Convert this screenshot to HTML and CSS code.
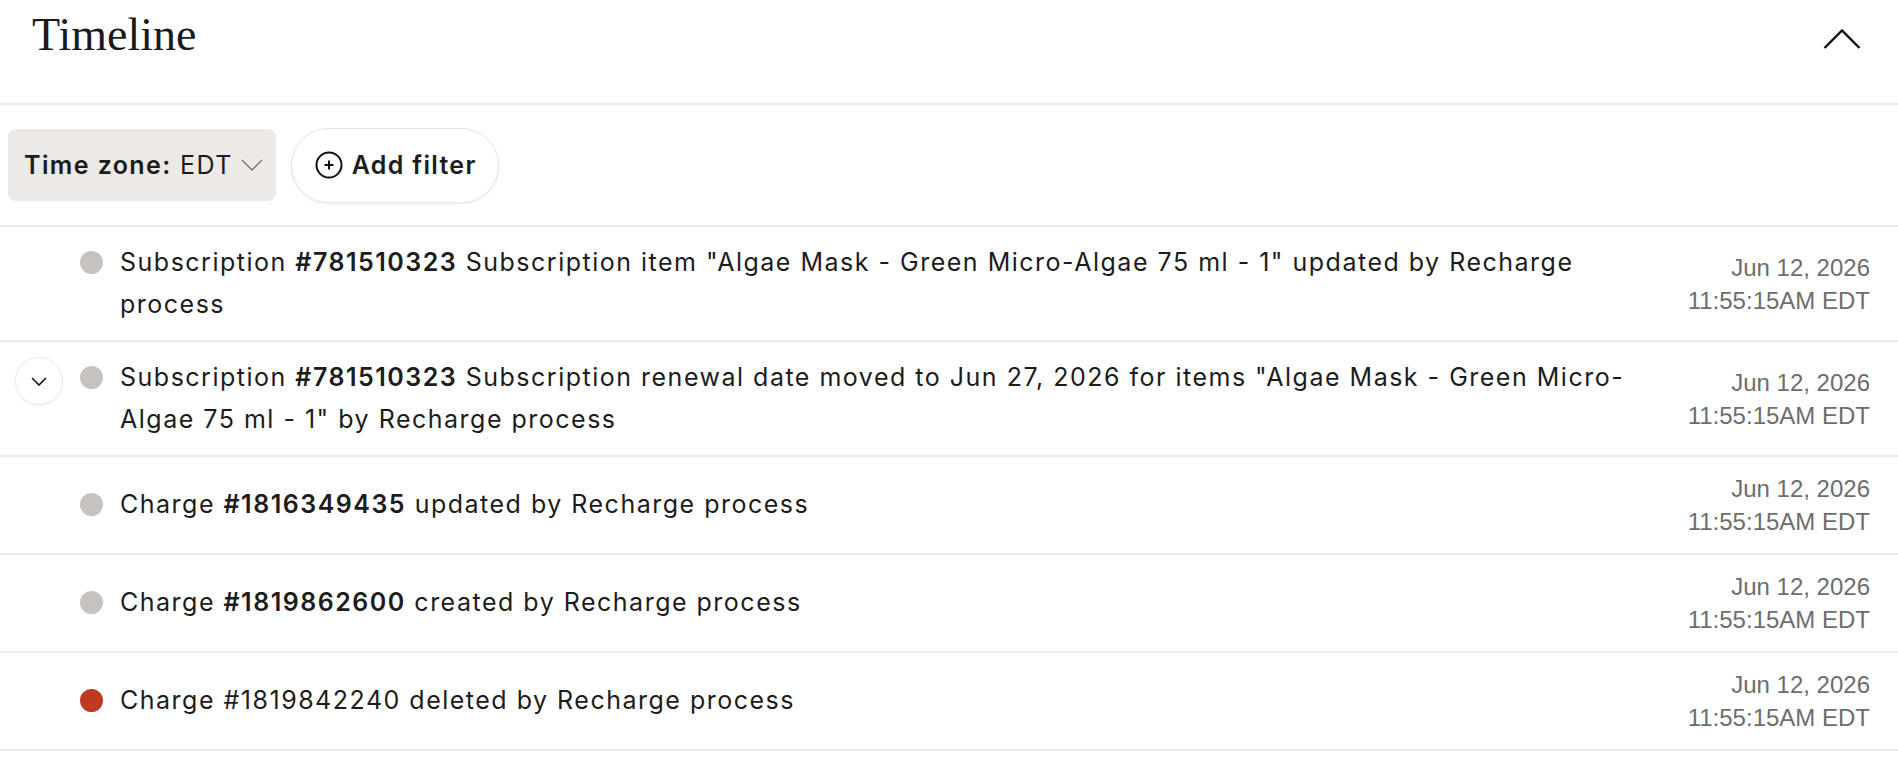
FILE: index.html
```html
<!DOCTYPE html>
<html lang="en">
<head>
    <meta charset="UTF-8">
    <meta name="viewport" content="width=device-width, initial-scale=1.0">
    <title>Timeline</title>
    <link rel="stylesheet" href="styles.css">
</head>
<body>
    <section class="timeline">
        <div class="timeline-header">
            <h2>Timeline</h2>
            <button class="collapse-button" aria-label="Collapse">
                <svg width="38" height="21" viewBox="0 0 38 21">
                    <polyline points="1.5,19 19,1.5 36.5,19" fill="none" stroke="#111" stroke-width="2.4"/>
                </svg>
            </button>
        </div>

        <div class="filters">
            <button class="filter-pill">
                <span><b>Time zone:</b> EDT</span>
                <svg width="22" height="12" viewBox="0 0 22 12">
                    <polyline points="1,1 11,11 21,1" fill="none" stroke="#777" stroke-width="1.4"/>
                </svg>
            </button>
            <button class="add-filter">
                <svg width="28" height="28" viewBox="0 0 28 28">
                    <circle cx="14" cy="14" r="12.5" fill="none" stroke="#111" stroke-width="2"/>
                    <path d="M14 9.5v9M9.5 14h9" stroke="#111" stroke-width="2"/>
                </svg>
                <span>Add filter</span>
            </button>
        </div>

        <ul class="events">
            <li class="event">
                <div class="event-main">
                    <div class="toggle-slot"></div>
                    <span class="dot"></span>
                    <p>Subscription <b>#781510323</b> Subscription item "Algae Mask - Green Micro-Algae 75 ml - 1" updated by Recharge process</p>
                </div>
                <div class="event-time">Jun 12, 2026<br>11:55:15AM EDT</div>
            </li>
            <li class="event">
                <div class="event-main">
                    <div class="toggle-slot">
                        <button class="expand-button" aria-label="Expand">
                            <svg width="16" height="9" viewBox="0 0 16 9">
                                <polyline points="1,1 8,8 15,1" fill="none" stroke="#111" stroke-width="1.6"/>
                            </svg>
                        </button>
                    </div>
                    <span class="dot"></span>
                    <p>Subscription <b>#781510323</b> Subscription renewal date moved to Jun 27, 2026 for items "Algae Mask - Green Micro-Algae 75 ml - 1" by Recharge process</p>
                </div>
                <div class="event-time">Jun 12, 2026<br>11:55:15AM EDT</div>
            </li>
            <li class="event">
                <div class="event-main">
                    <div class="toggle-slot"></div>
                    <span class="dot"></span>
                    <p>Charge <b>#1816349435</b> updated by Recharge process</p>
                </div>
                <div class="event-time">Jun 12, 2026<br>11:55:15AM EDT</div>
            </li>
            <li class="event">
                <div class="event-main">
                    <div class="toggle-slot"></div>
                    <span class="dot"></span>
                    <p>Charge <b>#1819862600</b> created by Recharge process</p>
                </div>
                <div class="event-time">Jun 12, 2026<br>11:55:15AM EDT</div>
            </li>
            <li class="event">
                <div class="event-main">
                    <div class="toggle-slot"></div>
                    <span class="dot dot-deleted"></span>
                    <p>Charge #1819842240 deleted by Recharge process</p>
                </div>
                <div class="event-time">Jun 12, 2026<br>11:55:15AM EDT</div>
            </li>
        </ul>
    </section>
</body>
</html>
```

FILE: styles.css
```css
body {
    margin: 0;
    font-family: Inter, "Noto Sans", sans-serif;
    color: #1c1c1c;
    background-color: white;
}

button {
    font-family: inherit;
    color: inherit;
    cursor: pointer;
}

b {
    font-weight: 600;
}

.timeline-header {
    display: flex;
    justify-content: space-between;
    align-items: flex-start;
    height: 105px;
    box-sizing: border-box;
    padding: 12px 37px 0 32px;
    border-bottom: 2px solid #eeeae6;
}

.timeline-header h2 {
    margin: 0;
    font-family: "Liberation Serif", serif;
    font-weight: normal;
    font-size: 46px;
    line-height: 1;
    color: #1a1a1a;
}

.collapse-button {
    margin-top: 17px;
    padding: 0;
    border: none;
    background: none;
    display: flex;
}

.filters {
    display: flex;
    align-items: center;
    gap: 15px;
    height: 122px;
    box-sizing: border-box;
    padding: 0 8px;
    border-bottom: 2px solid #eeeae6;
}

.filter-pill {
    display: flex;
    align-items: center;
    gap: 8px;
    height: 72px;
    padding: 0 13px 0 16px;
    border: none;
    border-radius: 8px;
    background-color: #ece9e6;
    font-size: 25px;
    letter-spacing: 1.4px;
}

.add-filter {
    display: flex;
    align-items: center;
    gap: 9px;
    height: 75px;
    padding: 0 21px 0 23px;
    border: 1px solid #e8e5e2;
    border-radius: 38px;
    background-color: white;
    box-shadow: 0 1px 3px rgba(0, 0, 0, 0.08);
    font-size: 25px;
    font-weight: 600;
    letter-spacing: 1.3px;
}

.events {
    list-style: none;
    margin: 0;
    padding: 0;
}

.event {
    display: flex;
    align-items: center;
    gap: 40px;
    padding: 15px 28px 15px 15px;
    border-bottom: 2px solid #eeeae6;
}

.event-main {
    flex: 1;
    display: flex;
    align-items: flex-start;
    gap: 17px;
}

.toggle-slot {
    width: 48px;
    flex-shrink: 0;
}

.expand-button {
    display: flex;
    align-items: center;
    justify-content: center;
    width: 48px;
    height: 48px;
    padding: 0;
    border: 1px solid #eeebe8;
    border-radius: 50%;
    background-color: white;
    box-shadow: 0 1px 3px rgba(0, 0, 0, 0.06);
}

.dot {
    flex-shrink: 0;
    width: 23px;
    height: 23px;
    margin-top: 9px;
    border-radius: 50%;
    background-color: #c6c2bf;
}

.dot-deleted {
    background-color: #bf3a20;
}

.event p {
    margin: 0;
    font-size: 25px;
    line-height: 41.5px;
    letter-spacing: 1.5px;
}

.event-time {
    flex-shrink: 0;
    text-align: right;
    font-family: "Liberation Sans", Arial, sans-serif;
    font-size: 24px;
    line-height: 33px;
    color: #6d6d6d;
}
```
